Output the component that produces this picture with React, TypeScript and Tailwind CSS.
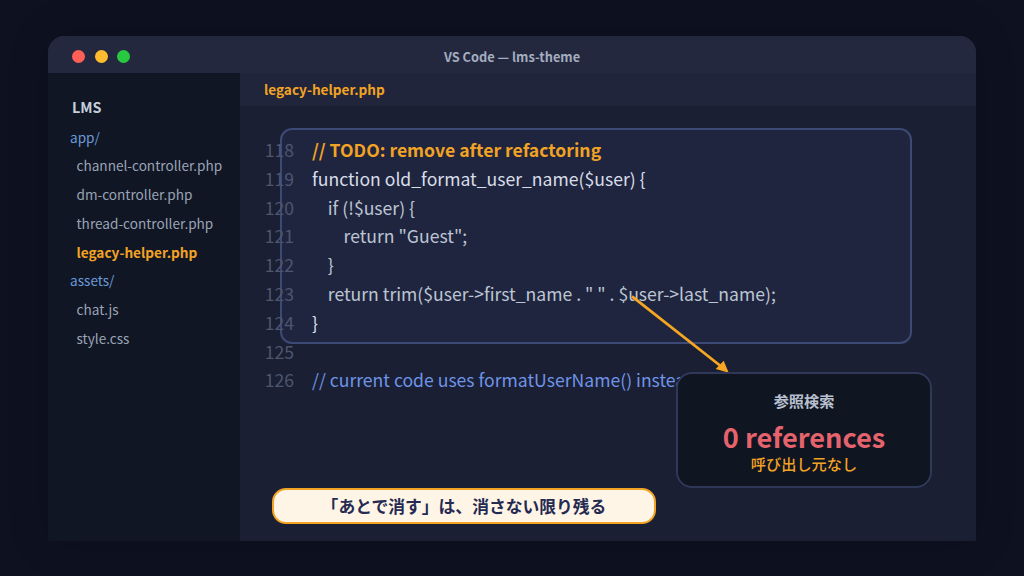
const font = { fontFamily: '"Noto Sans CJK JP", "Noto Sans", sans-serif' };

const files = [
  { name: "app/", kind: "dir" },
  { name: "channel-controller.php", kind: "file" },
  { name: "dm-controller.php", kind: "file" },
  { name: "thread-controller.php", kind: "file" },
  { name: "legacy-helper.php", kind: "active" },
  { name: "assets/", kind: "dir" },
  { name: "chat.js", kind: "file" },
  { name: "style.css", kind: "file" },
];

const lines = [
  { no: 118, text: "// TODO: remove after refactoring", cls: "text-[#f2a324] font-bold" },
  { no: 119, text: "function old_format_user_name($user) {", cls: "text-[#d8dee9]" },
  { no: 120, text: "    if (!$user) {", cls: "text-[#bcc5d4]" },
  { no: 121, text: "        return \"Guest\";", cls: "text-[#bcc5d4]" },
  { no: 122, text: "    }", cls: "text-[#bcc5d4]" },
  { no: 123, text: "    return trim($user->first_name . \" \" . $user->last_name);", cls: "text-[#bcc5d4]" },
  { no: 124, text: "}", cls: "text-[#d8dee9]" },
  { no: 125, text: "", cls: "" },
  { no: 126, text: "// current code uses formatUserName() instead", cls: "text-[#6f94e8]" },
];

export default function App() {
  return (
    <div className="relative w-[1024px] h-[576px] overflow-hidden bg-[#0e1120] pt-[36px] px-[48px]" style={font}>
      <div className="w-[928px] h-[505px] rounded-t-[16px] overflow-hidden flex flex-col bg-[#1a1f33] shadow-[0_0_40px_rgba(0,0,0,0.2)]">
        {/* Title bar */}
        <div className="relative h-[37px] shrink-0 bg-[#23283e] flex items-center justify-center">
          <div className="absolute left-[24px] top-[14px] flex gap-[9.5px]">
            <span className="w-[13px] h-[13px] rounded-full bg-[#ff5f57]" />
            <span className="w-[13px] h-[13px] rounded-full bg-[#febc2e]" />
            <span className="w-[13px] h-[13px] rounded-full bg-[#28c840]" />
          </div>
          <span className="text-[12.8px] font-bold text-[#a3adc0] mt-[5px]">VS Code — lms-theme</span>
        </div>

        <div className="flex flex-1 min-h-0">
          {/* Sidebar */}
          <div className="w-[192px] shrink-0 bg-[#111625] pt-[20px]">
            <div className="pl-[24px] text-[14.4px] leading-[28px] font-bold text-[#c5cedb]">LMS</div>
            <div className="mt-[1.5px]">
              {files.map((f) => (
                <div
                  key={f.name}
                  className={
                    f.kind === "dir"
                      ? "pl-[22px] h-[28.8px] leading-[28.8px] text-[13.6px] text-[#6a9bd8] whitespace-nowrap"
                      : f.kind === "active"
                        ? "pl-[28.5px] h-[28.8px] leading-[28.8px] text-[13.6px] font-bold text-[#f2a324] whitespace-nowrap"
                        : "pl-[28.5px] h-[28.8px] leading-[28.8px] text-[13.6px] text-[#9aa4b5] whitespace-nowrap"
                  }
                >
                  {f.name}
                </div>
              ))}
            </div>
          </div>

          {/* Editor */}
          <div className="relative flex-1 min-w-0">
            <div className="h-[33px] bg-[#20253b] pl-[24px] text-[13.6px] leading-[33px] font-bold text-[#f2a324]">
              legacy-helper.php
            </div>

            <div className="absolute left-[40px] top-[55px] w-[632px] h-[216px] rounded-[12px] border-2 border-[#3c4a75] bg-[#20253f]" />

            <div className="relative pt-[30px]">
              {lines.map((l) => (
                <div key={l.no} className="flex h-[28.8px] leading-[28.8px] text-[17.6px] whitespace-pre">
                  <span className="w-[54px] text-right text-[#4d566f] shrink-0">{l.no}</span>
                  <span className={"ml-[18px] " + l.cls}>{l.text}</span>
                </div>
              ))}
            </div>

            {/* Arrow */}
            <svg className="absolute left-[380px] top-[215px]" width="120" height="95" viewBox="0 0 120 95">
              <path d="M12 8.3 L100 77.5" stroke="#f5a623" strokeWidth="2.8" fill="none" />
              <path d="M108.7 84.7 L95.7 81 L103.7 72.7 Z" fill="#f5a623" />
            </svg>

            {/* Reference card */}
            <div className="absolute left-[436px] top-[299px] w-[256px] h-[116px] rounded-[16px] border-2 border-[#2f3858] bg-[#101522] flex flex-col items-center">
              <div className="mt-[14px] text-[15.2px] leading-[24px] font-bold text-[#b8c0cf]">参照検索</div>
              <div className="mt-[7px] text-[27.2px] leading-[34px] font-bold text-[#e5636c]">0 references</div>
              <div className="mt-[1px] text-[15.2px] leading-[18px] font-medium text-[#f2a324]">呼び出し元なし</div>
            </div>

            {/* Caption */}
            <div className="absolute left-[32px] top-[415px] w-[384px] h-[36px] rounded-[14px] border-2 border-[#f2a324] bg-[#fff5e6] flex items-center justify-center pt-[2px] text-[16.8px] font-bold text-[#252a52]">
              「あとで消す」は、消さない限り残る
            </div>
          </div>
        </div>
      </div>
    </div>
  );
}
